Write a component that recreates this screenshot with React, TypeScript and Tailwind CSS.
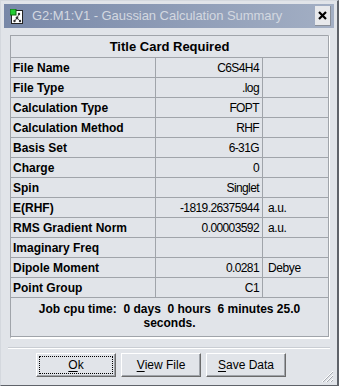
import React from "react";

const rows: [string, string, string][] = [
  ["File Name", "C6S4H4", ""],
  ["File Type", ".log", ""],
  ["Calculation Type", "FOPT", ""],
  ["Calculation Method", "RHF", ""],
  ["Basis Set", "6-31G", ""],
  ["Charge", "0", ""],
  ["Spin", "Singlet", ""],
  ["E(RHF)", "-1819.26375944", "a.u."],
  ["RMS Gradient Norm", "0.00003592", "a.u."],
  ["Imaginary Freq", "", ""],
  ["Dipole Moment", "0.0281", "Debye"],
  ["Point Group", "C1", ""],
];

function Btn({ first, rest, focus }: { first: string; rest: string; focus?: boolean }) {
  return (
    <div className="w-[80px] h-[24px] border border-t-white border-l-white border-r-[#6b6b6b] border-b-[#6b6b6b] bg-[#e1e4e9] flex items-center justify-center p-[2px] shadow-[inset_-1px_-1px_0_#a0a4aa]">
      <div
        className={
          "w-full h-full flex items-center justify-center text-[12px] text-black " +
          (focus ? "border border-dotted border-black" : "")
        }
        style={{ fontFamily: '"Liberation Sans", Arial, sans-serif' }}
      >
        <span className="underline underline-offset-2">{first}</span>
        <span>{rest}</span>
      </div>
    </div>
  );
}

export default function App() {
  return (
    <div
      className="w-[339px] h-[386px] bg-[#e1e4e9] border-l-[1px] border-t-[1px] border-r-[2px] border-b-[1px] border-l-[#d4d8de] border-t-[#d4d8de] border-r-[#5f636a] border-b-[#5f636a] flex flex-col relative overflow-hidden"
      style={{ fontFamily: '"Liberation Sans", Arial, sans-serif' }}
    >
      {/* title bar */}
      <div className="mx-[3px] mt-[3px] h-[24px] bg-gradient-to-r from-[#7888a8] to-[#a3afc4] flex items-center pl-[6px] pr-[3px]">
        <svg width="14" height="15" viewBox="0 0 14 15" className="shrink-0">
          <rect x="1.5" y="1.5" width="11" height="13" fill="#ffffff" stroke="#222" strokeWidth="1" />
          <rect x="0" y="0" width="6" height="6" fill="#22cc33" stroke="#116611" strokeWidth="1" />
          <circle cx="9" cy="5" r="1.2" fill="#333" />
          <circle cx="7" cy="9" r="1.4" fill="#333" />
          <circle cx="4.5" cy="12" r="1.2" fill="#333" />
          <circle cx="10" cy="12" r="1.2" fill="#333" />
          <line x1="9" y1="5" x2="7" y2="9" stroke="#333" strokeWidth="0.8" />
          <line x1="7" y1="9" x2="4.5" y2="12" stroke="#333" strokeWidth="0.8" />
          <line x1="7" y1="9" x2="10" y2="12" stroke="#333" strokeWidth="0.8" />
        </svg>
        <div className="ml-[8px] text-[13px] text-[#d3d8e0] whitespace-nowrap tracking-[-0.05px]">
          G2:M1:V1 - Gaussian Calculation Summary
        </div>
        <div className="ml-auto w-[16px] h-[20px] bg-[#e8e9ec] flex items-center justify-center border-r border-b border-[#8a8f98]">
          <svg width="9" height="9" viewBox="0 0 9 9">
            <path d="M1 1 L8 8 M8 1 L1 8" stroke="#000" strokeWidth="2.2" />
          </svg>
        </div>
      </div>

      {/* table frame */}
      <div className="ml-[9px] mt-[7px] w-[320px] border-l border-t border-[#a0a4aa] border-r-2 border-b-2 border-r-white border-b-white">
        <div className="w-[318px] border-r border-b border-[#a0a4aa]">
          <div className="h-[22px] border-b border-[#a0a4aa] flex items-center justify-center text-[13px] font-bold text-black">
            Title Card Required
          </div>
          {rows.map(([a, b, c]) => (
            <div key={a} className="h-[20px] border-b border-[#a0a4aa] flex text-black">
              <div className="w-[145px] border-r border-[#a0a4aa] pl-[2px] flex items-center text-[12px] font-bold whitespace-nowrap">
                {a}
              </div>
              <div className="w-[107px] border-r border-[#a0a4aa] pr-[3px] flex items-center justify-end text-[12px] tracking-[-0.6px] whitespace-nowrap">
                {b}
              </div>
              <div className="flex-1 pl-[5px] flex items-center text-[12px] tracking-[-0.4px] whitespace-nowrap">
                {c}
              </div>
            </div>
          ))}
          <div className="h-[38px] flex flex-col items-center justify-center text-[12px] font-bold leading-[14px] text-black whitespace-pre pb-[2px]">
            <div>{"Job cpu time:  0 days  0 hours  6 minutes 25.0"}</div>
            <div>seconds.</div>
          </div>
        </div>
      </div>

      {/* separator */}
      <div className="mx-[7px] mt-[8px] h-[2px] border-t border-[#c9cdd3] border-b border-b-white" />

      {/* buttons */}
      <div className="mt-[4px] flex gap-[5px] pl-[35px]">
        <Btn first="O" rest="k" focus />
        <Btn first="V" rest="iew File" />
        <Btn first="S" rest="ave Data" />
      </div>

      {/* resize grip */}
      <svg className="absolute right-[3px] bottom-[2px]" width="14" height="14" viewBox="0 0 14 14">
        <path d="M13 2 L2 13 M13 6 L6 13 M13 10 L10 13" stroke="#ffffff" strokeWidth="1" />
        <path d="M13 3 L3 13 M13 7 L7 13 M13 11 L11 13" stroke="#a8acb3" strokeWidth="1" />
      </svg>
    </div>
  );
}
